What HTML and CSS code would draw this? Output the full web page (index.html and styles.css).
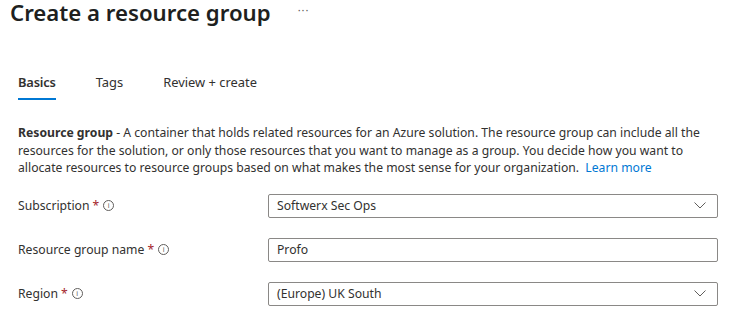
FILE: index.html
```html
<!DOCTYPE html>
<html>
<head>
<meta charset="utf-8">
<link rel="stylesheet" href="styles.css">
</head>
<body>
<div class="page">
  <header class="header">
    <h1 class="title">Create a resource group</h1>
    <span class="more">···</span>
  </header>
  <nav class="tabs">
    <span class="tab active">Basics</span>
    <span class="tab">Tags</span>
    <span class="tab">Review + create</span>
  </nav>
  <p class="desc"><b>Resource group</b> - A container that holds related resources for an Azure solution. The resource group can include all the<br>resources for the solution, or only those resources that you want to manage as a group. You decide how you want to<br>allocate resources to resource groups based on what makes the most sense for your organization. <a class="link">Learn more</a></p>
  <div class="form">
    <div class="row">
      <div class="label">Subscription <span class="req">*</span> <span class="info">i</span></div>
      <div class="field select"><span>Softwerx Sec Ops</span>
        <svg class="chev" width="12" height="7" viewBox="0 0 12 7"><path d="M0.5 0.5 L6 6 L11.5 0.5" fill="none" stroke="#605e5c" stroke-width="1"/></svg>
      </div>
    </div>
    <div class="row">
      <div class="label">Resource group name <span class="req">*</span> <span class="info">i</span></div>
      <div class="field"><span>Profo</span></div>
    </div>
    <div class="row">
      <div class="label">Region <span class="req">*</span> <span class="info">i</span></div>
      <div class="field select"><span>(Europe) UK South</span>
        <svg class="chev" width="12" height="7" viewBox="0 0 12 7"><path d="M0.5 0.5 L6 6 L11.5 0.5" fill="none" stroke="#605e5c" stroke-width="1"/></svg>
      </div>
    </div>
  </div>
</div>
</body>
</html>
```
FILE: styles.css
```css
* { box-sizing: border-box; }
html, body { margin: 0; padding: 0; background: #fff; }
body {
  font-family: "Noto Sans", "Open Sans", sans-serif;
  color: #323130;
  font-size: 12.2px;
  overflow: hidden;
}
.page { width: 729px; height: 311px; }
.header {
  display: flex;
  align-items: flex-start;
  padding-left: 10px;
  height: 30px;
}
.title {
  margin: 0;
  font-size: 22.2px;
  font-weight: 600;
  line-height: 28px;
  color: #201f1e;
  margin-top: -1px;
}
.more {
  margin-left: 27px;
  font-size: 11px;
  line-height: 14px;
  color: #605e5c;
  letter-spacing: 1px;
  margin-top: 3px;
}
.tabs {
  display: flex;
  gap: 40px;
  padding-left: 18px;
  margin-top: 42px;
  height: 28px;
}
.tab {
  font-size: 12.9px;
  line-height: 20px;
  height: 28px;
  color: #323130;
}
.tab.active {
  font-weight: 600;
  border-bottom: 2px solid #0078d4;
  letter-spacing: -0.2px;
}
.desc {
  margin: 24px 0 0 18px;
  width: 711px;
  line-height: 17.5px;
  white-space: nowrap;
}
.desc b { font-weight: 700; }
.link { color: #0078d4; margin-left: 3px; }
.form { margin-top: 17px; padding-left: 18px; }
.row {
  display: flex;
  align-items: center;
  height: 24px;
  margin-bottom: 20px;
}
.label {
  width: 250px;
  display: flex;
  align-items: center;
  gap: 3px;
}
.req { color: #a4262c; }
.info {
  width: 11px;
  height: 11px;
  border: 1px solid #605e5c;
  border-radius: 50%;
  font-size: 7px;
  line-height: 9px;
  text-align: center;
  color: #605e5c;
  margin-left: 1px;
}
.field {
  width: 450px;
  height: 24px;
  border: 1px solid #8a8886;
  border-radius: 2px;
  display: flex;
  align-items: center;
  justify-content: space-between;
  padding: 0 10px 0 8px;
}
.chev { margin-right: 1px; }
```
